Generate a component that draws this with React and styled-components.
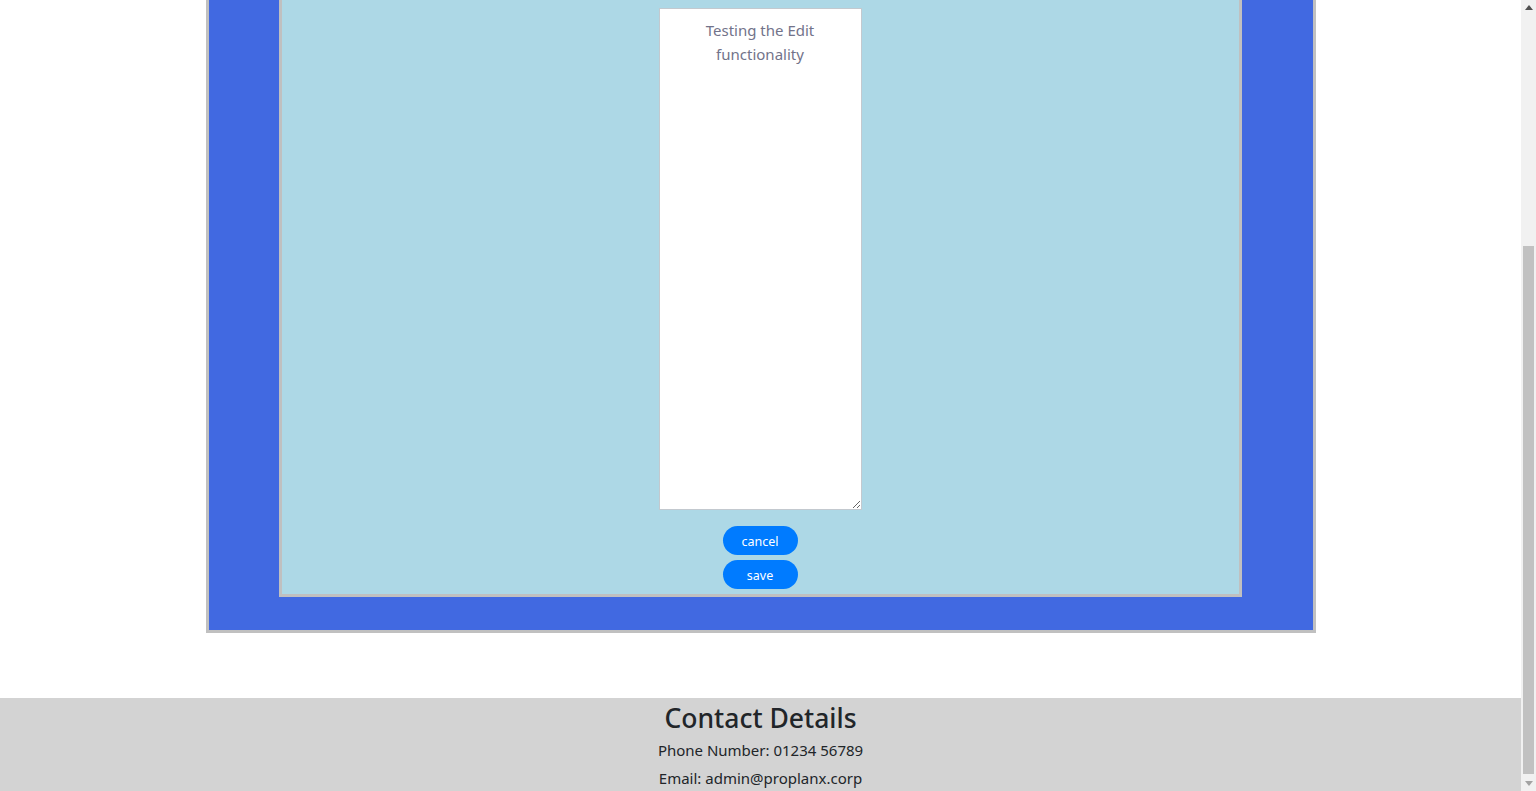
import React from "react";
import styled, { createGlobalStyle } from "styled-components";

const Global = createGlobalStyle`
  html, body { margin: 0; padding: 0; height: 100%; overflow: hidden; }
  body { font-family: "Noto Sans", "Open Sans", sans-serif; color: #212529; background: #fff; }
  #root { height: 100%; }
`;

const Viewport = styled.div`
  display: flex;
  height: 100vh;
  width: 100vw;
  overflow: hidden;
`;

const Main = styled.main`
  flex: 1;
  min-width: 0;
  display: flex;
  flex-direction: column;
  overflow: hidden;
`;

const Card = styled.section`
  box-sizing: border-box;
  width: 1110px;
  margin: 0 auto;
  background: #4169e1;
  border: 3px solid #c0c0c0;
  border-top: none;
  padding: 0 71px 33px 70px;
`;

const Panel = styled.div`
  background: #add8e6;
  border: 3px solid #c0c0c0;
  border-top: none;
  padding: 8px 0 5px;
  display: flex;
  flex-direction: column;
  align-items: center;
`;

const Editor = styled.textarea`
  box-sizing: border-box;
  width: 203px;
  height: 502px;
  margin: 0 0 16px;
  padding: 9px 12px;
  border: 1px solid #c3c9cf;
  border-radius: 0;
  background: #fff;
  font-family: "Noto Sans", "Open Sans", sans-serif;
  font-size: 15px;
  line-height: 24px;
  text-align: center;
  color: #212529;
  outline: none;
  &::placeholder { color: #72738a; opacity: 1; }
`;

const Actions = styled.div`
  display: flex;
  flex-direction: column;
  align-items: center;
  gap: 5px;
`;

const PillButton = styled.button`
  box-sizing: border-box;
  width: 75px;
  height: 29px;
  border: none;
  border-radius: 15px;
  background: #007bff;
  color: #fff;
  font-family: "Noto Sans", "Open Sans", sans-serif;
  font-size: 12.5px;
  line-height: 27px;
  padding: 2px 0 0;
  cursor: pointer;
`;

const Footer = styled.footer`
  margin-top: 65px;
  background: #d3d3d3;
  text-align: center;
  padding: 2px 0 12px;
`;

const FooterTitle = styled.h2`
  margin: 0;
  font-size: 26.5px;
  font-weight: 500;
  line-height: 36px;
  color: #212529;
`;

const FooterLine = styled.p`
  margin: 0;
  font-size: 15px;
  line-height: 28px;
  color: #212529;
`;

const Scrollbar = styled.div`
  width: 15px;
  flex: none;
  background: #f1f1f1;
  display: flex;
  flex-direction: column;
  align-items: stretch;
`;

const ArrowBox = styled.div`
  height: 15px;
  display: flex;
  align-items: center;
  justify-content: center;
  flex: none;
`;

const Track = styled.div`
  flex: 1;
  display: flex;
  flex-direction: column;
  justify-content: flex-end;
  padding: 0 2px 2px;
`;

const Thumb = styled.div`
  height: 528px;
  background: #c1c1c1;
`;

const Arrow = ({ up, color }) => (
  <svg width="8" height="5" viewBox="0 0 8 5" style={{ display: "block" }}>
    <polygon points={up ? "0,5 8,5 4,0" : "0,0 8,0 4,5"} fill={color} />
  </svg>
);

export default function App() {
  return (
    <>
      <Global />
      <Viewport>
        <Main>
          <Card>
            <Panel>
              <Editor placeholder="Testing the Edit functionality" />
              <Actions>
                <PillButton>cancel</PillButton>
                <PillButton>save</PillButton>
              </Actions>
            </Panel>
          </Card>
          <Footer>
            <FooterTitle>Contact Details</FooterTitle>
            <FooterLine>Phone Number: 01234 56789</FooterLine>
            <FooterLine>Email: admin@proplanx.corp</FooterLine>
          </Footer>
        </Main>
        <Scrollbar>
          <ArrowBox>
            <Arrow up color="#505050" />
          </ArrowBox>
          <Track>
            <Thumb />
          </Track>
          <ArrowBox>
            <Arrow color="#a3a3a3" />
          </ArrowBox>
        </Scrollbar>
      </Viewport>
    </>
  );
}
